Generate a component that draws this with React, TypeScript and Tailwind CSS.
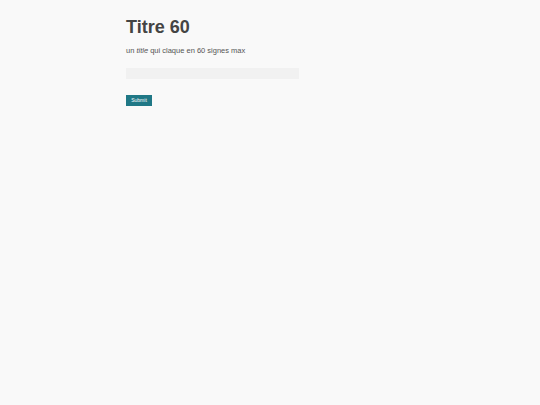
export default function App() {
  return (
    <div className="min-h-screen bg-[#f9f9f9] font-['Liberation_Sans',Arial,sans-serif] text-[#444]">
      <div className="mx-auto w-[288px] pt-[17px]">
        <h1 className="text-[18px] font-bold leading-[1.2]">Titre 60</h1>
        <p className="mt-[7px] text-[7.5px] leading-[1.3] text-[#555]">
          un <em>title</em> qui claque en 60 signes max
        </p>
        <form className="mt-[13px] flex flex-col items-start" onSubmit={(e) => e.preventDefault()}>
          <input
            type="text"
            className="h-[11px] w-[173px] border-0 bg-[#f1f1f1] outline-none"
          />
          <button
            type="submit"
            className="mt-[16px] h-[11px] w-[26px] bg-[#207886] text-[5px] leading-none text-white"
          >
            Submit
          </button>
        </form>
      </div>
    </div>
  );
}
